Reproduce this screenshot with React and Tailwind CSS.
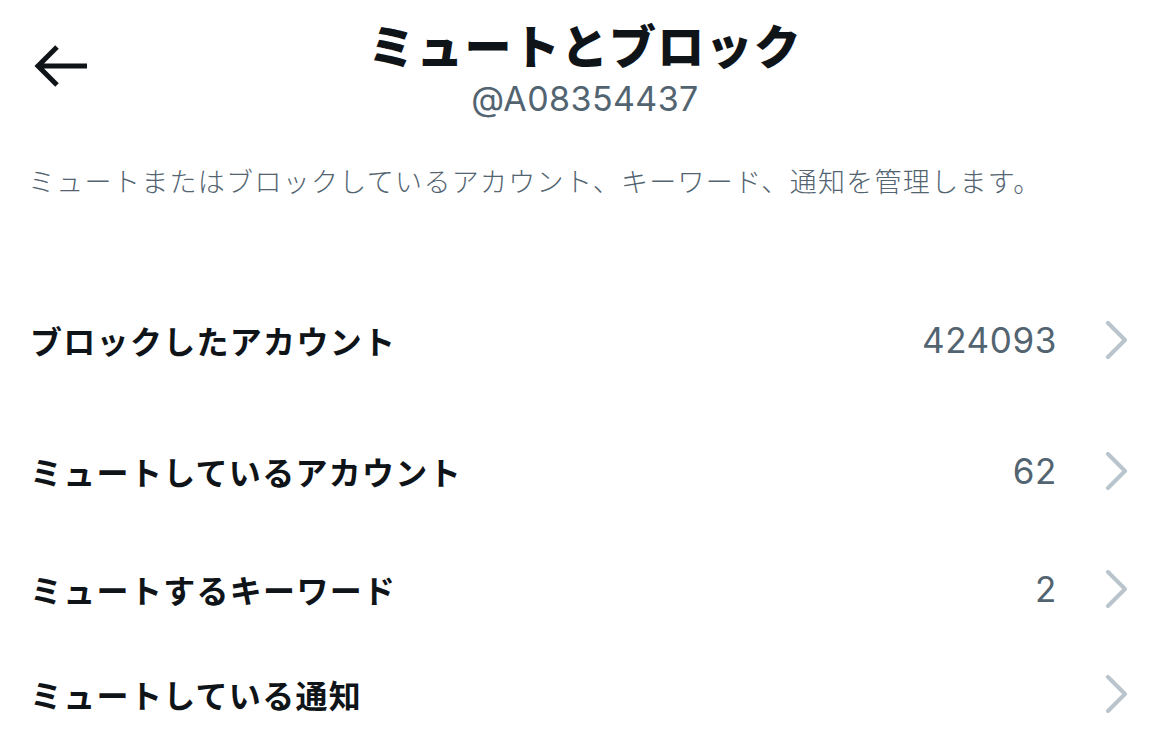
const rows = [
  { label: "ブロックしたアカウント", count: "424093", h: "h-[132px]" },
  { label: "ミュートしているアカウント", count: "62", h: "h-[130px]" },
  { label: "ミュートするキーワード", count: "2", h: "h-[106px]" },
  { label: "ミュートしている通知", count: "", h: "h-[104px]" },
];

function Chevron() {
  return (
    <svg width="24" height="38" viewBox="0 0 24 38" fill="none" className="shrink-0">
      <path d="M3 2 L20 19 L3 36" stroke="#b9c4cc" strokeWidth="4" strokeLinecap="round" strokeLinejoin="round" />
    </svg>
  );
}

export default function App() {
  return (
    <div className="w-[1170px] h-[752px] overflow-hidden bg-white text-[#0f1419] font-['Noto_Sans_CJK_JP',sans-serif]">
      <div className="relative flex flex-col items-center pt-[16px]">
        <button className="absolute left-[34px] top-[44px]">
          <svg width="56" height="44" viewBox="0 0 56 44" fill="none">
            <path d="M53 22 H5 M23 3 L4 22 L23 41" stroke="#0f1419" strokeWidth="5" strokeLinejoin="miter" />
          </svg>
        </button>
        <h1 className="text-[47px] leading-[56px] font-black tracking-[1.2px]">ミュートとブロック</h1>
        <p className="mt-[8px] text-[34px] leading-[38px] tracking-[0.4px] text-[#536471] font-['Inter','Liberation_Sans',sans-serif]">@A08354437</p>
      </div>

      <p className="mt-[45px] pl-[28px] text-[27px] leading-[36px] text-[#536471] font-light tracking-[1.3px]">
        ミュートまたはブロックしているアカウント、キーワード、通知を管理します。
      </p>

      <div className="mt-[75px]">
        {rows.map((r) => (
          <div key={r.label} className={`flex items-center pl-[30px] pr-[41px] ${r.h}`}>
            <span className="flex-1 text-[32px] font-bold tracking-[1.3px]">{r.label}</span>
            <span className="mr-[48px] text-[35px] tracking-[0.6px] text-[#536471] font-['Inter','Liberation_Sans',sans-serif]">{r.count}</span>
            <Chevron />
          </div>
        ))}
      </div>
    </div>
  );
}
